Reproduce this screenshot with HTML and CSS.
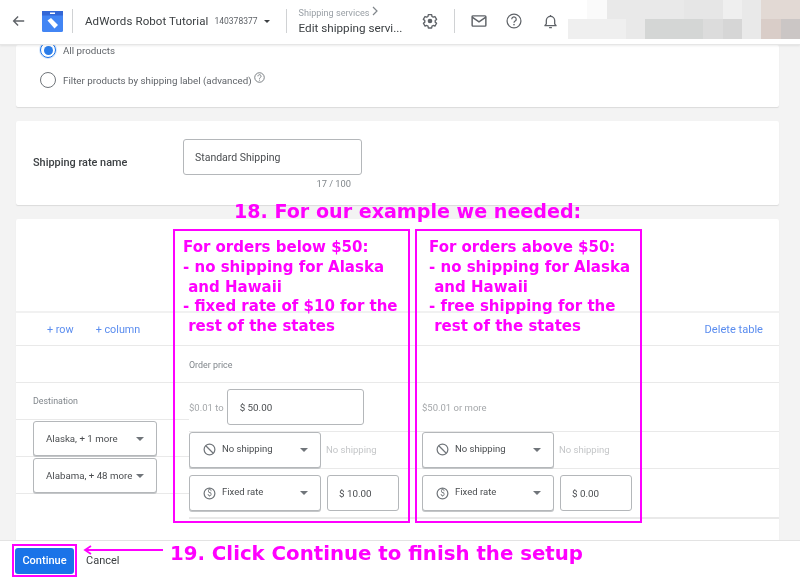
FILE: index.html
```html
<!DOCTYPE html>
<html lang="en">
<head>
<meta charset="utf-8">
<title>Edit shipping service</title>
<link rel="stylesheet" href="styles.css">
</head>
<body>
<div class="page">
  <header class="topbar">
    <svg class="back" viewBox="0 0 16 14" width="13" height="12"><path d="M15 7H2M7.500 1.500 2 7l5.500 5.500" fill="none" stroke="#5f6368" stroke-width="1.700"/></svg>
    <svg class="logo" viewBox="0 0 21 21" width="21" height="21"><rect width="21" height="21" rx="1.500" fill="#4285f4"/><rect width="21" height="4.500" fill="#3367d6"/><rect x="8" y="1.500" width="5" height="1.500" fill="#fff"/><path d="M5.500 9.500 9 7l7 7-3.500 3.500z" fill="#fff"/></svg>
    <span class="vline"></span>
    <span class="account">AdWords Robot Tutorial</span>
    <span class="acc-id">140378377</span>
    <span class="caret dark"></span>
    <span class="vline second"></span>
    <div class="crumb">
      <div class="crumb-top">Shipping services <svg viewBox="0 0 6 10" width="6" height="10"><path d="M1 1l4 4-4 4" fill="none" stroke="#80868b" stroke-width="1.200"/></svg></div>
      <div class="crumb-title">Edit shipping servi...</div>
    </div>
    <svg class="ico gear" viewBox="0 0 24 24" width="16" height="16"><path d="M9.500 2.500h5l.5 2.800 1.800 1 2.600-1 2.500 4.300-2.100 1.700v2.400l2.100 1.700-2.500 4.300-2.600-1-1.800 1-.5 2.800h-5l-.5-2.800-1.800-1-2.600 1-2.500-4.300 2.100-1.700v-2.400L2 9.600l2.500-4.300 2.600 1 1.800-1z" fill="none" stroke="#5f6368" stroke-width="2" stroke-linejoin="round"/><circle cx="12" cy="12" r="3.500" fill="#5f6368"/></svg>
    <span class="vline third"></span>
    <svg class="ico mail" viewBox="0 0 18 14" width="16" height="12"><rect x="1" y="1" width="16" height="12" rx="1" fill="none" stroke="#5f6368" stroke-width="1.700"/><path d="M1 2.500 9 8l8-5.500" fill="none" stroke="#5f6368" stroke-width="1.700"/></svg>
    <svg class="ico help" viewBox="0 0 18 18" width="16" height="16"><circle cx="9" cy="9" r="7.800" fill="none" stroke="#5f6368" stroke-width="1.400"/><path d="M6.500 7a2.500 2.500 0 1 1 3.800 2.100C9.400 9.700 9 10.100 9 11" fill="none" stroke="#5f6368" stroke-width="1.400"/><rect x="8.200" y="12.300" width="1.600" height="1.600" fill="#5f6368"/></svg>
    <svg class="ico bell" viewBox="0 0 14 16" width="13" height="15"><path d="M1 12.500h12l-1.500-2V7a4.500 4.500 0 0 0-9 0v3.500z" fill="none" stroke="#5f6368" stroke-width="1.400" stroke-linejoin="round"/><path d="M5.500 14.500h3M7 1v1.500" stroke="#5f6368" stroke-width="1.400"/></svg>
    <div class="mosaic">
      <i class="m0"></i><i class="m1"></i><i class="m2"></i><i class="m2"></i><i class="m2"></i><i class="m2"></i><i class="m3"></i><i class="m3"></i><i class="m1b"></i><i class="m2"></i><i class="m7"></i><i class="m7"></i>
      <i class="m1b"></i><i class="m1b"></i><i class="m1b"></i><i class="m2"></i><i class="m4"></i><i class="m4"></i><i class="m4"></i><i class="m5"></i><i class="m6"></i><i class="m2"></i><i class="m8"></i><i class="m9"></i>
    </div>
  </header>

  <main class="content">
    <section class="card card-products">
      <div class="radio-row"><span class="radio on"></span><span>All products</span></div>
      <div class="radio-row"><span class="radio"></span><span>Filter products by shipping label (advanced)</span>
        <svg class="hint" viewBox="0 0 12 12" width="11" height="11"><circle cx="6" cy="6" r="5.200" fill="none" stroke="#70757a"/><path d="M4.300 4.700a1.700 1.700 0 1 1 2.600 1.400C6.300 6.500 6 6.800 6 7.400M6 8.400v1" fill="none" stroke="#70757a"/></svg>
      </div>
    </section>

    <section class="card card-name">
      <div class="name-label">Shipping rate name</div>
      <div class="name-field">
        <div class="field name-input">Standard Shipping</div>
        <div class="counter">17 / 100</div>
      </div>
    </section>

    <section class="card card-table">
      <div class="table-blank"></div>
      <div class="table-tools">
        <span class="link">+ row</span>
        <span class="link">+ column</span>
        <span class="link delete">Delete table</span>
      </div>
      <div class="price-head">Order price</div>
      <div class="table-body">
        <div class="dest">
          <div class="dest-head">Destination</div>
          <div class="dest-row"><div class="field select dest-select"><span>Alaska, + 1 more</span><span class="caret"></span></div></div>
          <div class="dest-row"><div class="field select dest-select"><span>Alabama, + 48 more</span><span class="caret"></span></div></div>
        </div>
        <div class="rates">
          <div class="rate-row price-row">
            <div class="rate-col"><span class="muted">$0.01 to</span><div class="field price-input">$ 50.00</div></div>
            <div class="rate-col"><span class="muted">$50.01 or more</span></div>
          </div>
          <div class="rate-row none-row">
            <div class="rate-col">
              <div class="field select rate-select"><svg class="sico" viewBox="0 0 14 14" width="13" height="13"><circle cx="7" cy="7" r="5.800" fill="none" stroke="#70757a" stroke-width="1.300"/><path d="M3 3l8 8" stroke="#70757a" stroke-width="1.300"/></svg><span class="sel-text">No shipping</span><span class="caret"></span></div>
              <span class="faint">No shipping</span>
            </div>
            <div class="rate-col">
              <div class="field select rate-select"><svg class="sico" viewBox="0 0 14 14" width="13" height="13"><circle cx="7" cy="7" r="5.800" fill="none" stroke="#70757a" stroke-width="1.300"/><path d="M3 3l8 8" stroke="#70757a" stroke-width="1.300"/></svg><span class="sel-text">No shipping</span><span class="caret"></span></div>
              <span class="faint">No shipping</span>
            </div>
          </div>
          <div class="rate-row fixed-row">
            <div class="rate-col">
              <div class="field select rate-select"><svg class="sico" viewBox="0 0 14 14" width="13" height="13"><circle cx="7" cy="7" r="5.800" fill="none" stroke="#70757a" stroke-width="1.300"/><text x="7" y="10" text-anchor="middle" class="dollar">$</text></svg><span class="sel-text">Fixed rate</span><span class="caret"></span></div>
              <div class="field amount">$ 10.00</div>
            </div>
            <div class="rate-col">
              <div class="field select rate-select"><svg class="sico" viewBox="0 0 14 14" width="13" height="13"><circle cx="7" cy="7" r="5.800" fill="none" stroke="#70757a" stroke-width="1.300"/><text x="7" y="10" text-anchor="middle" class="dollar">$</text></svg><span class="sel-text">Fixed rate</span><span class="caret"></span></div>
              <div class="field amount">$ 0.00</div>
            </div>
          </div>
        </div>
      </div>
    </section>
  </main>

  <footer class="footer">
    <button class="continue">Continue</button>
    <span class="cancel">Cancel</span>
  </footer>

  <div class="note heading">18. For our example we needed:</div>
  <div class="note box box-left">For orders below $50:<br>- no shipping for Alaska<br>&nbsp;and Hawaii<br>- fixed rate of $10 for the<br>&nbsp;rest of the states</div>
  <div class="note box box-right">For orders above $50:<br>- no shipping for Alaska<br>&nbsp;and Hawaii<br>- free shipping for the<br>&nbsp;rest of the states</div>
  <div class="continue-ring"></div>
  <svg class="arrow" viewBox="0 0 80 10" width="80" height="10"><path d="M80 5H2M8 1 2 5l6 4" fill="none" stroke="#ff00ff" stroke-width="1.800"/></svg>
  <div class="note step">19. Click Continue to finish the setup</div>
</div>
</body>
</html>
```

FILE: styles.css
```css
* { box-sizing: border-box; }
html, body { margin: 0; padding: 0; }
body { font-family: Roboto, "Liberation Sans", sans-serif; color: #3c4043; }
.page { position: relative; width: 800px; height: 578px; overflow: hidden; display: flex; flex-direction: column; background: #f3f3f3; filter: blur(.3px); }

/* top bar */
.topbar { height: 45px; flex: none; display: flex; align-items: center; padding-bottom: 2px; background: #fff; border-bottom: 1px solid #e6e6e6; box-shadow: 0 1px 2px rgba(0,0,0,.08); position: relative; z-index: 2; }
.back { margin-left: 12px; flex: none; }
.logo { margin-left: 17px; flex: none; }
.vline { width: 1px; height: 24px; background: #d0d2d4; margin-left: 9px; flex: none; }
.account { margin-left: 12px; font-size: 11.500px; color: #3c4043; letter-spacing: .1px; white-space: nowrap; }
.acc-id { margin-left: 6px; font-size: 8.500px; color: #5f6368; }
.caret { width: 0; height: 0; border-left: 4px solid transparent; border-right: 4px solid transparent; border-top: 4px solid #70757a; flex: none; }
.caret.dark { margin-left: 6px; border-top-color: #3c4043; border-left-width: 3.500px; border-right-width: 3.500px; border-top-width: 3.500px; }
.vline.second { margin-left: 16px; }
.crumb { margin-left: 12px; width: 112px; flex: none; white-space: nowrap; }
.crumb-top { font-size: 9.100px; line-height: 12px; color: #9aa0a6; height: 13px; }
.crumb-title { font-size: 11.700px; line-height: 16px; color: #3c4043; margin-top: 1px; }
.gear { margin-left: 11px; flex: none; }
.vline.third { margin-left: 16px; }
.mail { margin-left: 16px; flex: none; }
.help { margin-left: 19px; flex: none; }
.bell { margin-left: 22px; flex: none; }
.mosaic { position: absolute; right: 0; top: 0; width: 232px; height: 39px; display: grid; grid-template-columns: repeat(12, 1fr); grid-template-rows: 19px 20px; }
.m0 { background: #fff; } .m1 { background: #fafafa; } .m1b { background: #efefef; } .m2 { background: #e9e9e9; } .m3 { background: #e6e6e6; }
.m4 { background: #d4d6d5; } .m5 { background: #dcdcdc; } .m6 { background: #d6d6d6; } .m7 { background: #e2d9d4; } .m8 { background: #d9cdc8; } .m9 { background: #cbc6c5; }

/* cards */
.content { flex: 1; min-height: 0; padding: 0 21px 0 16px; display: flex; flex-direction: column; gap: 14px; overflow: hidden; }
.card { background: #fff; border-radius: 2px; box-shadow: 0 1px 1px rgba(0,0,0,.1); flex: none; }
.card-products { height: 62px; padding: 0 0 0 24px; font-size: 9.750px; color: #5f6368; display: flex; flex-direction: column; gap: 20px; }
.radio-row { height: 10px; display: flex; align-items: center; gap: 7px; }
.radio-row .hint { margin: -5px 0 0 -5px; }
.radio { width: 16px; height: 16px; border-radius: 50%; border: 1.500px solid #70757a; flex: none; position: relative; }
.radio.on { border-color: #1a73e8; box-shadow: 0 0 0 1px rgba(26,115,232,.18); }
.radio.on::after { content: ""; position: absolute; inset: 2.500px; border-radius: 50%; background: #2b7de9; }

.card-name { height: 84px; display: flex; padding: 18px 0 0 17px; }
.name-label { width: 150px; font-size: 10.900px; font-weight: 500; color: #3c4043; padding-top: 17px; }
.field { border: 1px solid #b4b7ba; border-radius: 3px; background: #fff; color: #4a4d50; display: flex; align-items: center; }
.name-input { width: 179px; height: 36px; padding-left: 11px; font-size: 10.500px; }
.counter { font-size: 9.300px; color: #80868b; text-align: right; padding: 3px 11px 0 0; }

.card-table { height: 340px; display: flex; flex-direction: column; }
.table-blank { height: 94px; border-bottom: 2px solid #f1f1f1; }
.table-tools { height: 33px; display: flex; align-items: center; padding: 0 16px 0 31px; border-bottom: 1px solid #e9e9e9; font-size: 10.800px; color: #5b8def; }
.link { margin-right: 22px; }
.link.delete { margin: 0 0 0 auto; font-size: 11.100px; }
.price-head { height: 37px; padding: 14px 0 0 173px; font-size: 8.900px; color: #80868b; border-bottom: 1px solid #e9e9e9; }
.table-body { display: flex; flex: 1; }
.dest { width: 173px; flex: none; }
.dest-head { height: 37px; padding: 13px 0 0 17px; font-size: 8.900px; color: #80868b; border-bottom: 1px solid #e9e9e9; }
.dest-row { height: 37px; padding: 1px 0 0 17px; border-bottom: 1px solid #e9e9e9; }
.select { justify-content: space-between; box-shadow: 0 1px 0 #c4c6c8; }
.dest-select { width: 124px; height: 35px; padding: 0 12px 0 12px; font-size: 9.700px; white-space: nowrap; }
.rates { flex: 1; }
.rate-row { display: flex; border-bottom: 1px solid #e9e9e9; }
.rate-col { width: 233px; display: flex; align-items: center; flex: none; font-size: 9.500px; }
.price-row { height: 49px; }
.none-row { height: 37px; }
.fixed-row { height: 50px; border-bottom-width: 2px; }
.none-row .rate-col { padding-bottom: 1px; }
.muted { color: #a4a7aa; }
.faint { color: #c4c6c8; margin-left: 5px; }
.price-input { width: 137px; height: 36px; margin-left: 3px; padding-left: 12px; font-size: 9.800px; }
.rate-select { width: 132px; height: 36px; padding: 0 12px 0 13px; justify-content: flex-start; }
.sel-text { margin: -3px 0 0 6px; flex: 1; white-space: nowrap; }
.sico { flex: none; }
.dollar { font-size: 9px; fill: #70757a; font-family: Roboto, sans-serif; }
.amount { width: 72px; height: 36px; margin-left: 6px; padding-left: 11px; font-size: 9.800px; }

/* footer */
.footer { height: 38px; flex: none; background: #fff; border-top: 1px solid #e3e3e3; display: flex; align-items: center; padding: 2px 0 0 15px; position: relative; z-index: 1; }
.continue { width: 59px; height: 26px; border: 0; border-radius: 3px; background: #1a73e8; color: #fff; font: 500 11px Roboto, sans-serif; padding: 0; }
.cancel { margin-left: 12px; font-size: 11px; color: #3c4043; }

/* annotations */
.note { position: absolute; z-index: 3; font-family: "DejaVu Sans", Verdana, sans-serif; font-weight: 700; color: #ff00ff; white-space: nowrap; }
.heading { left: 234px; top: 201px; font-size: 19.100px; line-height: 22px; }
.box { top: 229px; height: 294px; border: 2px solid #ff00ff; font-size: 15px; line-height: 19.800px; padding: 7px 0 0 8px; }
.box-left { left: 173px; width: 237px; }
.box-right { left: 415px; width: 227px; padding-left: 12px; }
.continue-ring { position: absolute; z-index: 3; left: 12px; top: 544px; width: 65px; height: 33px; border: 2px solid #ff00ff; }
.arrow { position: absolute; z-index: 3; left: 83px; top: 545px; }
.step { left: 170px; top: 542px; font-size: 19.750px; line-height: 24px; }
```
